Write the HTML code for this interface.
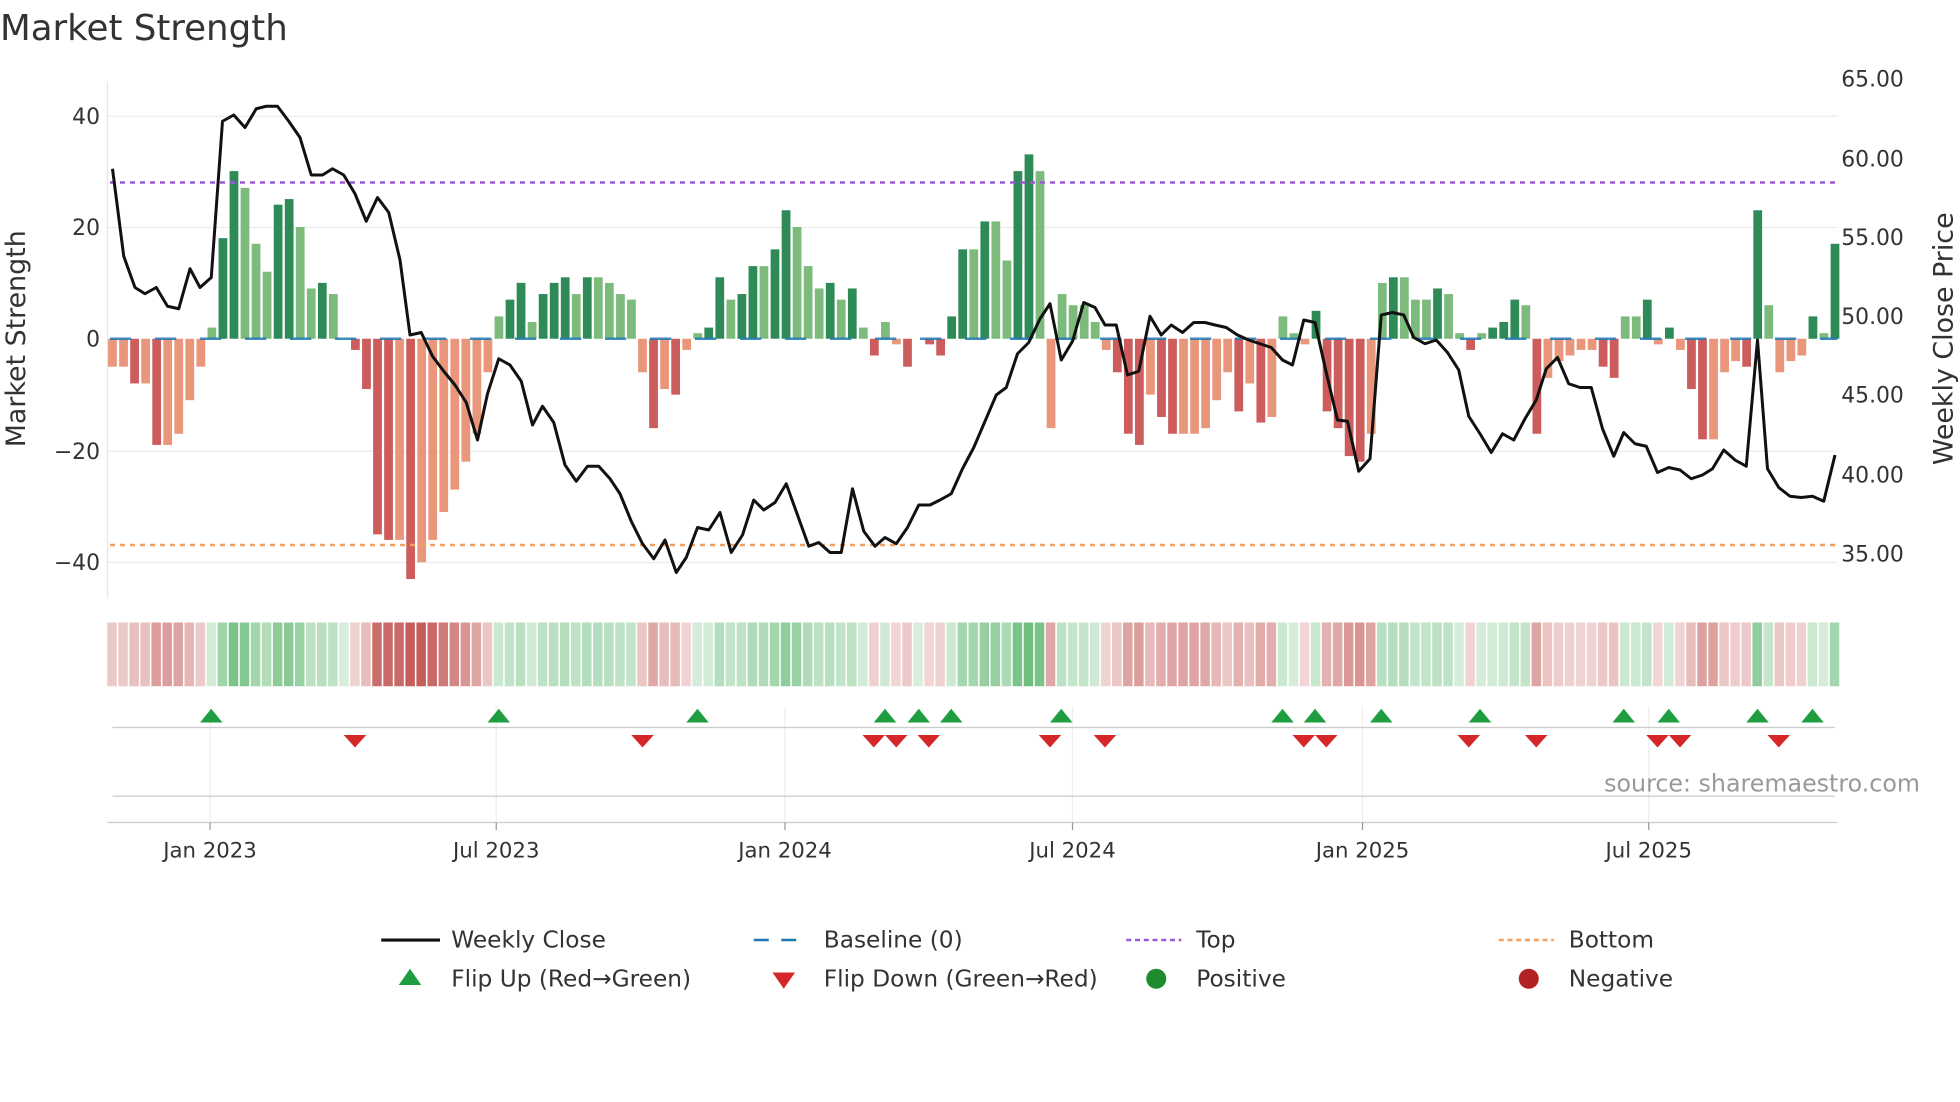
<!DOCTYPE html>
<html><head><meta charset="utf-8"><style>
html,body{margin:0;padding:0;background:#fff;width:1960px;height:1102px;overflow:hidden}
svg{display:block}
text{font-family:"DejaVu Sans","Liberation Sans",sans-serif}
</style></head><body>
<svg id="s" width="1960" height="1102" viewBox="0 0 1568 881.6" xmlns="http://www.w3.org/2000/svg">
<text x="0" y="32" font-size="28.5" fill="#333">Market Strength</text>
<g stroke="#ececec" stroke-width="1">
<line x1="86" y1="93" x2="1470" y2="93"/><line x1="86" y1="182" x2="1470" y2="182"/>
<line x1="86" y1="361" x2="1470" y2="361"/><line x1="86" y1="450" x2="1470" y2="450"/>
</g>
<line x1="86" y1="65" x2="86" y2="478" stroke="#e6e6e6"/>
<g font-size="17.5" fill="#333" text-anchor="end">
<text x="80" y="99">40</text><text x="80" y="188">20</text><text x="80" y="277">0</text>
<text x="80" y="367">−20</text><text x="80" y="456">−40</text>
</g>
<g font-size="17.5" fill="#333">
<text x="1473" y="69">65.00</text><text x="1473" y="133">60.00</text><text x="1473" y="196">55.00</text>
<text x="1473" y="259">50.00</text><text x="1473" y="322">45.00</text><text x="1473" y="386">40.00</text><text x="1473" y="449">35.00</text>
</g>
<text transform="translate(20,271) rotate(-90)" font-size="21.5" fill="#333" text-anchor="middle">Market Strength</text>
<text transform="translate(1562,271) rotate(-90)" font-size="21.5" fill="#333" text-anchor="middle">Weekly Close Price</text>
<g id="bars"></g>
<line x1="88" y1="271" x2="1470" y2="271" stroke="#1f77b4" stroke-width="2" stroke-dasharray="17,19" opacity="0.85"/>
<line x1="88" y1="146" x2="1470" y2="146" stroke="#9b59d6" stroke-width="2" stroke-dasharray="4,4"/>
<line x1="88" y1="436" x2="1470" y2="436" stroke="#f0a060" stroke-width="2" stroke-dasharray="4,4"/>
<polyline id="price" fill="none" stroke="#111" stroke-width="2.4" stroke-linejoin="round"/>
<g id="heat"></g>
<g stroke="#eee"><line x1="168" y1="565" x2="168" y2="660"/><line x1="397" y1="565" x2="397" y2="660"/><line x1="628" y1="565" x2="628" y2="660"/><line x1="858" y1="565" x2="858" y2="660"/><line x1="1090" y1="565" x2="1090" y2="660"/><line x1="1319" y1="565" x2="1319" y2="660"/></g>
<line x1="90" y1="582" x2="1468" y2="582" stroke="#ccc"/>
<line x1="90" y1="637" x2="1468" y2="637" stroke="#ccc"/>
<line x1="86" y1="658" x2="1470" y2="658" stroke="#ccc"/>
<g id="flips"></g>
<g stroke="#999"><line x1="168" y1="658" x2="168" y2="664"/><line x1="397" y1="658" x2="397" y2="664"/><line x1="628" y1="658" x2="628" y2="664"/><line x1="858" y1="658" x2="858" y2="664"/><line x1="1090" y1="658" x2="1090" y2="664"/><line x1="1319" y1="658" x2="1319" y2="664"/></g>
<g font-size="17" fill="#333" text-anchor="middle">
<text x="168" y="686">Jan 2023</text><text x="397" y="686">Jul 2023</text><text x="628" y="686">Jan 2024</text>
<text x="858" y="686">Jul 2024</text><text x="1090" y="686">Jan 2025</text><text x="1319" y="686">Jul 2025</text>
</g>
<text x="1536" y="633" font-size="19" fill="#999" text-anchor="end">source: sharemaestro.com</text>
<g font-size="18.6" fill="#333">
<line x1="305" y1="752" x2="352" y2="752" stroke="#111" stroke-width="2.5"/><text x="361" y="758">Weekly Close</text>
<line x1="603" y1="752" x2="646" y2="752" stroke="#1f77b4" stroke-width="2" stroke-dasharray="12,10"/><text x="659" y="758">Baseline (0)</text>
<line x1="901" y1="752" x2="945" y2="752" stroke="#9b59d6" stroke-width="2" stroke-dasharray="4,3"/><text x="957" y="758">Top</text>
<line x1="1199" y1="752" x2="1243" y2="752" stroke="#f0a060" stroke-width="2" stroke-dasharray="4,3"/><text x="1255" y="758">Bottom</text>
<polygon points="319,788 337,788 328,775" fill="#1e9e40"/><text x="361" y="789">Flip Up (Red→Green)</text>
<polygon points="618,778 636,778 627,791" fill="#d62728"/><text x="659" y="789">Flip Down (Green→Red)</text>
<circle cx="925" cy="783" r="8" fill="#1e8c2e"/><text x="957" y="789">Positive</text>
<circle cx="1223" cy="783" r="8" fill="#b22222"/><text x="1255" y="789">Negative</text>
</g>
</svg>
<script>
var v=[-5,-5,-8,-8,-19,-19,-17,-11,-5,2,18,30,27,17,12,24,25,20,9,10,8,0,-2,-9,-35,-36,-36,-43,-40,-36,-31,-27,-22,-17,-6,4,7,10,3,8,10,11,8,11,11,10,8,7,-6,-16,-9,-10,-2,1,2,11,7,8,13,13,16,23,20,13,9,10,7,9,2,-3,3,-1,-5,0,-1,-3,4,16,16,21,21,14,30,33,30,-16,8,6,6,3,-2,-6,-17,-19,-10,-14,-17,-17,-17,-16,-11,-6,-13,-8,-15,-14,4,1,-1,5,-13,-16,-21,-22,-17,10,11,11,7,7,9,8,1,-2,1,2,3,7,6,-17,-7,-4,-3,-2,-2,-5,-7,4,4,7,-1,2,-2,-9,-18,-18,-6,-4,-5,23,6,-6,-4,-3,4,1,17];
var ns="http://www.w3.org/2000/svg",B=document.getElementById('bars'),H=document.getElementById('heat');
var step=(1468-90)/(v.length-1);
function el(p,t,a){var e=document.createElementNS(ns,t);for(var k in a)e.setAttribute(k,a[k]);p.appendChild(e);return e;}
for(var i=0;i<v.length;i++){var x=90+i*step,val=v[i],y0=271,h=Math.abs(val)*4.47;
var dark=i==0?false:Math.abs(val)>Math.abs(v[i-1]);
var c=val>=0?(dark?'#2e8b57':'#7dbb7d'):(dark?'#cd5c5c':'#e9967a');
if(val!=0)el(B,'rect',{x:x-3.5,y:val>0?y0-h:y0,width:7,height:h,fill:c});
var a=0.22+Math.min(Math.abs(val),40)/40*0.7;
el(H,'rect',{x:x-4.2,y:498,width:7.6,height:51,fill:val>=0?'#4caf60':'#c0504d','fill-opacity':a});}
var p="90,135 99,205 108,230 116,235 125,230 134,245 143,247 152,215 160,230 169,222 178,97 187,92 196,102 205,87 213,85 222,85 231,97 240,110 249,140 258,140 266,135 275,140 284,155 293,177 302,158 311,170 320,208 328,268 337,266 346,285 355,297 364,308 373,322 382,352 390,315 399,287 408,292 417,305 426,340 434,325 443,338 452,372 461,385 470,373 479,373 488,383 496,395 505,417 514,435 523,447 532,432 541,458 549,446 558,422 567,424 576,410 585,442 594,428 603,400 611,408 620,402 629,387 638,412 647,437 655,434 664,442 673,442 682,391 691,425 700,437 708,430 717,435 726,422 735,404 744,404 752,400 761,395 770,375 779,358 788,337 797,316 805,310 814,283 823,274 832,255 840,243 849,288 858,273 867,242 876,246 884,260 893,260 902,300 911,297 920,253 929,268 937,260 946,266 955,258 964,258 972,260 981,262 990,268 999,272 1008,275 1017,278 1026,288 1034,292 1043,256 1052,258 1061,298 1070,336 1078,337 1087,377 1096,367 1105,252 1114,250 1123,252 1131,270 1140,275 1149,272 1158,282 1167,296 1175,333 1184,347 1193,362 1202,347 1211,352 1220,335 1229,320 1237,295 1246,286 1255,307 1264,310 1273,310 1282,343 1291,365 1299,346 1308,355 1317,357 1326,378 1335,374 1344,376 1353,383 1362,380 1370,375 1379,360 1388,368 1397,373 1406,272 1414,375 1423,390 1432,397 1441,398 1450,397 1459,401 1468,364";
document.getElementById('price').setAttribute('points',p);
var F=document.getElementById('flips');
[169,399,558,708,735,761,849,1026,1052,1105,1184,1299,1335,1406,1450].forEach(function(x){el(F,'polygon',{points:(x-9)+',578 '+(x+9)+',578 '+x+',567',fill:'#1e9e40'});});
[284,514,699,717,743,840,884,1043,1061,1175,1229,1326,1344,1423].forEach(function(x){el(F,'polygon',{points:(x-9)+',588 '+(x+9)+',588 '+x+',598',fill:'#d62728'});});
</script>
</body></html>
